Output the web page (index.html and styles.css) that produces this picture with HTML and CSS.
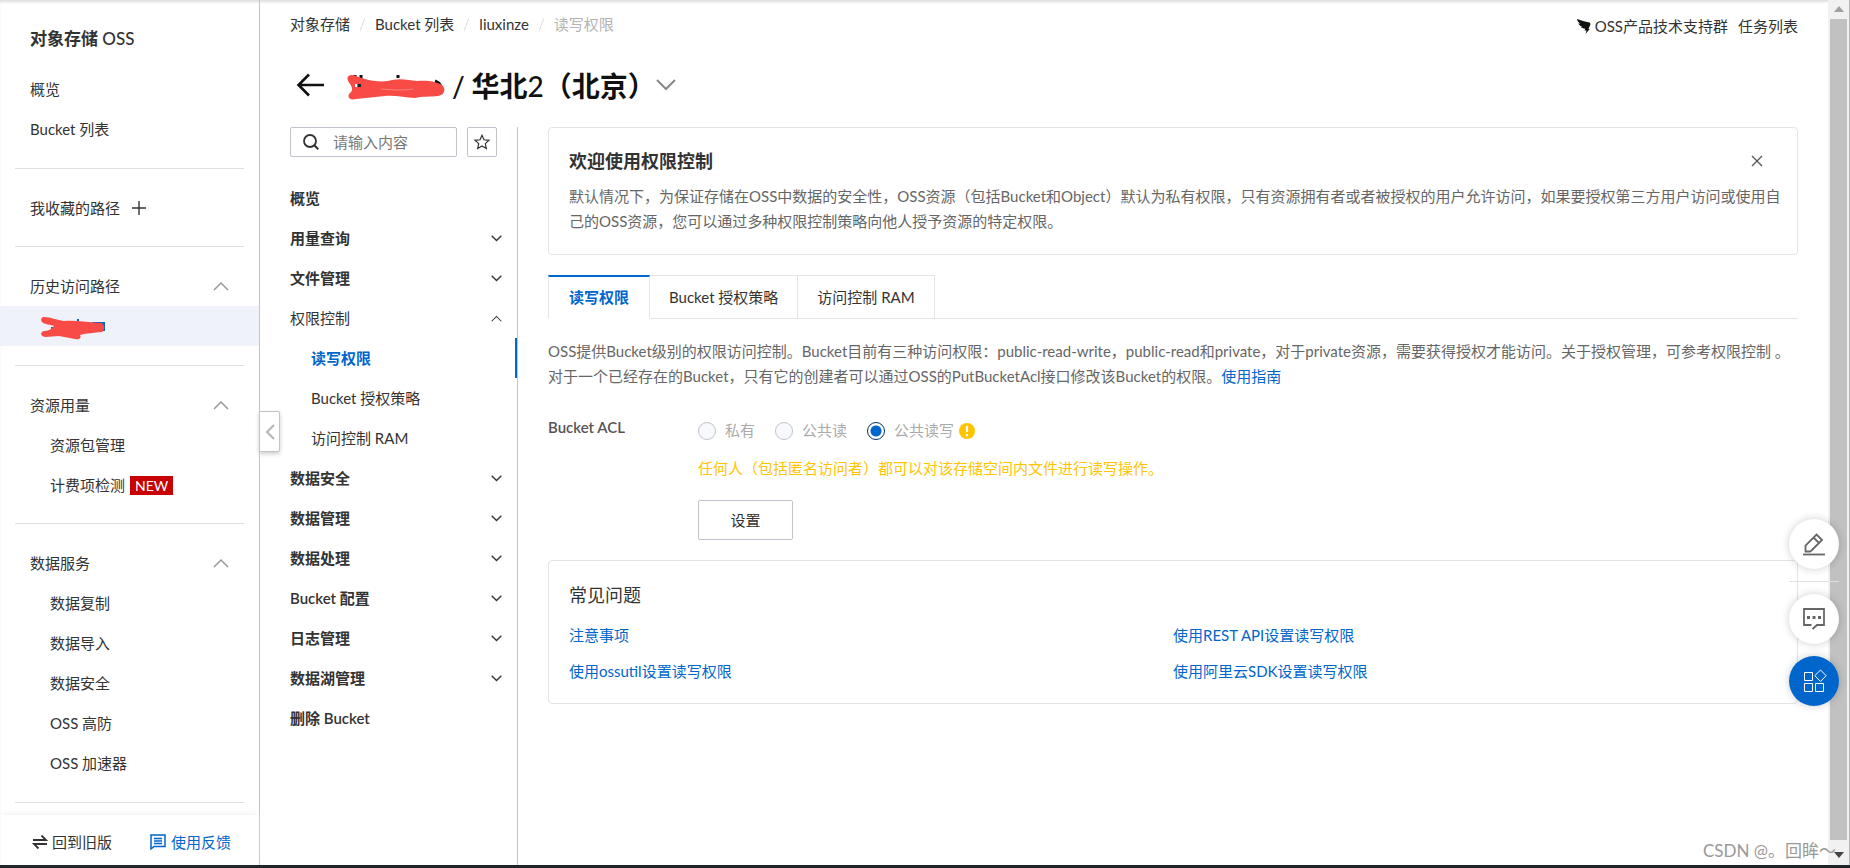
FILE: index.html
```html
<!DOCTYPE html>
<html lang="zh-CN">
<head>
<meta charset="utf-8">
<title>对象存储 OSS</title>
<link rel="stylesheet" href="styles.css">
</head>
<body>
<svg width="0" height="0" class="defs" aria-hidden="true">
  <symbol id="up" viewBox="0 0 16 10"><path d="M1 9 8 2l7 7" fill="none" stroke="currentColor" stroke-width="1.5"/></symbol>
  <symbol id="down" viewBox="0 0 16 10"><path d="M1 1l7 7 7-7" fill="none" stroke="currentColor" stroke-width="2"/></symbol>
</svg>
<div class="app">
  <aside class="sidebar">
    <h2 class="product"><b>对象存储</b> OSS</h2>
    <nav class="side-nav">
      <a class="row" href="#">概览</a>
      <a class="row" href="#">Bucket 列表</a>
    </nav>
    <section class="group">
      <div class="row">我收藏的路径
        <button class="plus" aria-label="添加路径"><svg viewBox="0 0 14 14"><path d="M7 0v14M0 7h14" stroke="currentColor" stroke-width="1.4"/></svg></button>
      </div>
    </section>
    <section class="group">
      <button class="row fold">历史访问路径<svg class="chev"><use href="#up"/></svg></button>
      <a class="row sub selected" href="#" aria-label="Bucket">
        <svg class="scribble-s" viewBox="0 0 66 24"><path d="M12 11v5M38 3v2M52 7h12v8" stroke="#06c" stroke-width="2" fill="none"/><path d="M4 1C11 1 16 4 24 5c12-1 26 2 38 2 3 3 3 6 0 9-8 1-15 1-22 3 2 3-1 5-5 4l-16-3-14 1c-5-1-5-5-1-6 4 0 8-2 10-5-4-2-9-1-12-4-2-3 0-5 2-5z" fill="#f84b46"/></svg>
      </a>
    </section>
    <section class="group">
      <button class="row fold">资源用量<svg class="chev"><use href="#up"/></svg></button>
      <a class="row sub" href="#">资源包管理</a>
      <a class="row sub" href="#">计费项检测<span class="new">NEW</span></a>
    </section>
    <section class="group last">
      <button class="row fold">数据服务<svg class="chev"><use href="#up"/></svg></button>
      <a class="row sub" href="#">数据复制</a>
      <a class="row sub" href="#">数据导入</a>
      <a class="row sub" href="#">数据安全</a>
      <a class="row sub" href="#">OSS 高防</a>
      <a class="row sub" href="#">OSS 加速器</a>
    </section>
    <footer class="side-foot">
      <a href="#"><svg class="swap" viewBox="0 0 14 14"><path d="M0 5h13L8.500 .5M14 9H1l4.500 4.500" fill="none" stroke="currentColor" stroke-width="1.800"/></svg>回到旧版</a>
      <a class="link" href="#"><svg class="note" viewBox="0 0 16 16"><path d="M1 15V1h14v11.500H4z" fill="none" stroke="currentColor" stroke-width="1.500"/><path d="M4 4.500h8M4 7h8M4 9.500h8" stroke="currentColor" stroke-width="1.300"/></svg>使用反馈</a>
    </footer>
    <button class="collapse" aria-label="收起"><svg viewBox="0 0 10 16"><path d="M9 1 2 8l7 7" fill="none" stroke="#b5b5b5" stroke-width="2"/></svg></button>
  </aside>

  <main class="main">
    <header class="top">
      <nav class="crumbs">
        <a href="#">对象存储</a><i></i><a href="#">Bucket 列表</a><i></i><a href="#">liuxinze</a><i></i><span>读写权限</span>
      </nav>
      <div class="top-links">
        <a href="#"><svg class="wing" viewBox="0 0 14 15"><path d="M0 0c4 1.500 8 2.500 12.500 3.500 1 .5 1 1.500.8 2.300L11.500 10h1.200L8.500 15l1-3.500H7.500l.8-1.800C6 9.500 4.500 9 3.500 7.800l2 .2C3.500 7.200 2 6 1.300 4.300l2.200.5C1.500 3.500.3 2 0 0z" fill="#111"/></svg>OSS产品技术支持群</a>
        <a href="#">任务列表</a>
      </div>
    </header>
    <div class="heading">
      <button class="back" aria-label="返回"><svg viewBox="0 0 28 24"><path d="M13 1.500 2.500 12 13 22.500M2 12h26" fill="none" stroke="#111" stroke-width="2.600"/></svg></button>
      <svg class="scribble" viewBox="0 0 98 26"><path d="M8 1v8M14 1v4M51 1v3M88 7q8 3 6 13" stroke="#111" stroke-width="3" fill="none"/><path d="M4 1c5 0 14 5 24 6 8 1 14 0 17-1 9-2 17 0 25 1 11-1 22 1 26 5 3 4 1 9-5 10-7 1-16 0-23 2-10 0-19-3-30-2l-29 3c-7 2-10-3-5-7 2-2 1-5-1-8C0 6-1 2 4 1z" fill="#f84b46"/><path d="M8 10h2v3H8z" fill="#fff"/><path d="M11 10h3v3h-3z" fill="#222"/><path d="M34 15q20 2 32 0" fill="none" stroke="#fff" stroke-opacity=".5" stroke-width=".6"/></svg>
      <h1><span>/</span> 华北<span>2</span>（北京）</h1>
      <button class="switch" aria-label="切换"><svg viewBox="0 0 20 12"><path d="M1 1l9 9 9-9" fill="none" stroke="#888" stroke-width="2"/></svg></button>
    </div>

    <div class="body">
      <div class="subnav">
        <div class="tools">
          <label class="search">
            <svg viewBox="0 0 16 16"><circle cx="7" cy="7" r="6" fill="none" stroke="#333" stroke-width="1.800"/><path d="m11 11 4.300 4.300" stroke="#333" stroke-width="2"/></svg>
            <input type="text" placeholder="请输入内容" aria-label="搜索">
          </label>
          <button class="star" aria-label="收藏"><svg viewBox="0 0 16 16"><path d="m8 1.300 2 4.500 5 .5-3.700 3.300 1 4.900L8 12l-4.300 2.500 1-4.900L1 6.300l5-.5z" fill="none" stroke="#333" stroke-width="1.200"/></svg></button>
        </div>
        <nav class="menu">
          <a href="#">概览</a>
          <a href="#">用量查询<svg><use href="#down"/></svg></a>
          <a href="#">文件管理<svg><use href="#down"/></svg></a>
          <a class="open" href="#">权限控制<svg><use href="#up"/></svg></a>
          <a class="child current" href="#">读写权限</a>
          <a class="child" href="#">Bucket 授权策略</a>
          <a class="child" href="#">访问控制 RAM</a>
          <a href="#">数据安全<svg><use href="#down"/></svg></a>
          <a href="#">数据管理<svg><use href="#down"/></svg></a>
          <a href="#">数据处理<svg><use href="#down"/></svg></a>
          <a href="#">Bucket 配置<svg><use href="#down"/></svg></a>
          <a href="#">日志管理<svg><use href="#down"/></svg></a>
          <a href="#">数据湖管理<svg><use href="#down"/></svg></a>
          <a href="#">删除 Bucket</a>
        </nav>
      </div>

      <div class="content">
        <section class="card welcome">
          <div class="card-head">
            <h3>欢迎使用权限控制</h3>
            <button class="close" aria-label="关闭"><svg viewBox="0 0 12 12"><path d="m1 1 10 10M11 1 1 11" stroke="#555" stroke-width="1.300"/></svg></button>
          </div>
          <p>默认情况下，为保证存储在OSS中数据的安全性，OSS资源（包括Bucket和Object）默认为私有权限，只有资源拥有者或者被授权的用户允许访问，如果要授权第三方用户访问或使用自己的OSS资源，您可以通过多种权限控制策略向他人授予资源的特定权限。</p>
        </section>

        <div class="tabs" role="tablist">
          <button class="tab active" role="tab" aria-selected="true">读写权限</button>
          <button class="tab" role="tab">Bucket 授权策略</button>
          <button class="tab" role="tab">访问控制 RAM</button>
        </div>

        <p class="desc">OSS提供Bucket级别的权限访问控制。Bucket目前有三种访问权限：public-read-write，public-read和private，对于private资源，需要获得授权才能访问。关于授权管理，可参考权限控制 。<br>对于一个已经存在的Bucket，只有它的创建者可以通过OSS的PutBucketAcl接口修改该Bucket的权限。<a class="link" href="#">使用指南</a></p>

        <div class="acl">
          <div class="acl-label">Bucket ACL</div>
          <div class="acl-field">
            <div class="radios">
              <label><input type="radio" name="acl" disabled>私有</label>
              <label><input type="radio" name="acl" disabled>公共读</label>
              <label><input type="radio" name="acl" disabled checked>公共读写</label>
              <svg class="warn" viewBox="0 0 16 16"><circle cx="8" cy="8" r="8" fill="#ffc400"/><path d="M8 3v6M8 11v2.200" stroke="#fff" stroke-width="2.200"/></svg>
            </div>
            <p class="warning">任何人（包括匿名访问者）都可以对该存储空间内文件进行读写操作。</p>
            <button class="set">设置</button>
          </div>
        </div>

        <section class="card faq">
          <h3>常见问题</h3>
          <div class="faq-grid">
            <a class="link" href="#">注意事项</a>
            <a class="link" href="#">使用REST API设置读写权限</a>
            <a class="link" href="#">使用ossutil设置读写权限</a>
            <a class="link" href="#">使用阿里云SDK设置读写权限</a>
          </div>
        </section>
      </div>
    </div>
  </main>

  <div class="scroll" aria-hidden="true">
    <svg viewBox="0 0 10 6"><path d="M0 6 5 0l5 6z" fill="#a0a0a0"/></svg>
    <div class="thumb"></div>
    <svg viewBox="0 0 10 6"><path d="m0 0 5 6 5-6z" fill="#444"/></svg>
  </div>

  <div class="floats">
    <button aria-label="编辑"><svg viewBox="0 0 24 24"><path d="M3.500 19.500v-6L14.500 2.500l5.500 5.500L9.500 18.500 8 19.500zM11.500 5.500l5.500 5.500" fill="none" stroke="#666" stroke-width="1.800"/><path d="M1 22.500h22" stroke="#666" stroke-width="1.800"/></svg></button>
    <hr>
    <button aria-label="消息"><svg viewBox="0 0 24 24"><path d="M9.500 18H2V2h20v16h-7l-4.500 4" fill="none" stroke="#666" stroke-width="1.800"/><path d="M5 9h3v3H5zM10.500 9h3v3h-3zM16 9h3v3h-3z" fill="#666"/></svg></button>
    <button class="apps" aria-label="应用"><svg viewBox="0 0 24 24"><path d="M2.500 3.500h8v8h-8zM2.500 14.500h8v8h-8zM13.500 14.500h8v8h-8zM18.500 1l5.700 5.700-5.700 5.700-5.700-5.700z" fill="none" stroke="#fff" stroke-width="1"/></svg></button>
  </div>
  <div class="watermark">CSDN @。回眸～</div>
</div>
</body>
</html>
```
FILE: styles.css
```css
* { box-sizing: border-box; }
body {
  margin: 0;
  font: 15px/25px Lato, "Noto Sans CJK SC", sans-serif;
  color: #333;
  background: #fff;
}
a { color: inherit; text-decoration: none; }
button { font: inherit; color: inherit; background: none; border: 0; padding: 0; }
h1, h2, h3, p { margin: 0; }
svg { display: block; flex: none; overflow: visible; }
.defs { position: absolute; }
.link { color: #06c; }

.app {
  position: relative;
  display: flex;
  min-height: 100vh;
  border-bottom: 3px solid #202427;
  box-shadow: inset 0 3px 3px -1px #ddd;
}

/* left sidebar */
.sidebar {
  position: relative;
  flex: none;
  width: 260px;
  display: flex;
  flex-direction: column;
  border-right: 1px solid #c0c3cc;
}
.product { padding: 26px 30px 18px; font-size: 17px; font-weight: 500; }
.side-nav { padding-bottom: 19px; }
.row {
  display: flex;
  align-items: center;
  width: 100%;
  height: 40px;
  padding: 0 30px;
}
.row.sub { padding-left: 50px; }
.row.selected { padding: 4px 0 0 40px; background: #eff2f8; }
.fold { justify-content: space-between; }
.chev { width: 16px; height: 10px; color: #999; }
.plus { margin-left: 12px; }
.plus svg { width: 14px; height: 14px; }
.group { position: relative; padding: 20px 0 18px; }
.group:has(.selected) { padding-bottom: 19px; }
.group::before, .group.last::after {
  content: "";
  position: absolute;
  left: 15px;
  right: 15px;
  top: 0;
  height: 1px;
  background: #e0e0e0;
}
.group.last { padding-bottom: 20px; }
.group.last::after { top: auto; bottom: 0; }
.scribble-s { width: 66px; height: 24px; }
.new { margin-left: 5px; padding: 0 5px; font-size: 14px; line-height: 19px; background: #c80000; color: #fff; }
.side-foot {
  display: flex;
  flex: 1;
  align-items: center;
  justify-content: space-between;
  margin-top: 12px;
  padding: 4px 28px 0 33px;
  box-shadow: 0 -3px 6px -2px #eee;
}
.side-foot a { display: flex; align-items: center; gap: 5px; }
.swap { width: 14px; height: 14px; }
.note { width: 16px; height: 16px; }
.collapse {
  position: absolute;
  left: 259px;
  top: 411px;
  z-index: 1;
  width: 21px;
  height: 41px;
  padding-left: 5px;
  background: #fff;
  border: 1px solid #c0c3cc;
  border-radius: 0 2px 2px 0;
  box-shadow: 0 2px 4px #ccc;
}
.collapse svg { width: 10px; height: 16px; }

/* main column */
.main { flex: 1; min-width: 0; display: flex; flex-direction: column; padding: 12px 30px 0; }
.top { display: flex; justify-content: space-between; height: 26px; }
.crumbs, .top-links { display: flex; }
.crumbs span { color: #b3b3b3; }
.crumbs i { width: 1px; height: 13px; margin: 6px 12px; background: #ddd; transform: rotate(20deg); }
.top-links { gap: 10px; padding-top: 2px; }
.top-links a { display: flex; align-items: center; gap: 4px; }
.wing { width: 14px; height: 15px; }
.heading { display: flex; align-items: center; height: 89px; padding: 4px 6px 0; color: #111; }
.back svg { width: 28px; height: 24px; }
.scribble { width: 98px; height: 26px; margin: 4px 7px 0 23px; }
.heading h1 { padding-top: 3px; font-size: 28px; line-height: 40px; font-weight: 700; }
.heading h1 span { font-weight: 500; }
.switch svg { width: 20px; height: 12px; }

.body { flex: 1; display: flex; gap: 30px; }
.subnav { flex: none; width: 228px; border-right: 1px solid #c0c3cc; }
.tools { display: flex; gap: 10px; height: 30px; padding-right: 20px; }
.search {
  flex: 1;
  display: flex;
  align-items: center;
  gap: 14px;
  padding-left: 12px;
  border: 1px solid #c0c3cc;
  border-radius: 2px;
}
.search svg { width: 16px; height: 16px; }
.search input { width: 100%; min-width: 0; padding: 0; border: 0; outline: 0; font: inherit; background: none; }
.search input::placeholder { color: #777; }
.star { display: grid; place-items: center; width: 30px; border: 1px solid #c0c3cc; border-radius: 2px; }
.star svg { width: 16px; height: 16px; }
.menu { padding-top: 21px; }
.menu a {
  display: flex;
  align-items: center;
  justify-content: space-between;
  height: 40px;
  padding-right: 15px;
  font-weight: 600;
}
.menu svg { width: 11px; height: 7px; }
.menu a.open, .menu a.child { font-weight: 400; }
.menu a.child { padding-left: 21px; }
.menu a.current { color: #06c; font-weight: 600; border-right: 2px solid #06c; }

/* content */
.content { flex: 1; min-width: 0; }
.card { border: 1px solid #e3e4e6; border-radius: 4px; }
.card h3 { font-size: 18px; line-height: 30px; }
.welcome { padding: 18px 12px 20px 20px; }
.welcome p { color: #666; }
.card-head { display: flex; align-items: center; justify-content: space-between; padding: 0 22px 8px 0; }
.close svg { width: 12px; height: 12px; }
.tabs { display: flex; margin-top: 20px; border-bottom: 1px solid #e3e4e6; }
.tab {
  height: 44px;
  margin-bottom: -1px;
  padding: 0 19px;
  border: 1px solid #e3e4e6;
  border-left: 0;
}
.tab.active {
  padding: 0 20px;
  border-left: 1px solid #e3e4e6;
  border-top: 2px solid #06c;
  border-bottom-color: #fff;
  color: #06c;
  font-weight: 600;
}
.desc { padding-top: 20px; color: #666; }
.acl { display: flex; padding-top: 26px; color: #555; }
.acl-label { width: 150px; font-weight: 600; }
.radios { display: flex; align-items: center; padding-top: 3px; color: #aaa; }
.radios label { display: flex; align-items: center; margin-right: 20px; }
.radios label:last-of-type { margin-right: 5px; }
.radios input {
  appearance: none;
  width: 18px;
  height: 18px;
  margin: 0 9px 0 0;
  border: 1px solid #c0c3cc;
  border-radius: 50%;
  background: #f7f9fc;
}
.radios input:checked {
  border-color: #036;
  background: radial-gradient(circle, #06c 5px, #fff 6px);
}
.warn { width: 16px; height: 16px; }
.warning { padding-top: 13px; color: #ffc400; }
.set { margin-top: 19px; width: 95px; height: 40px; border: 1px solid #c0c3cc; border-radius: 2px; color: #333; }
.faq { margin-top: 20px; padding: 19px 20px; }
.faq h3 { font-weight: 400; }
.faq-grid { display: grid; grid-template-columns: 1fr 1fr; row-gap: 11px; padding-top: 13px; }

/* window scrollbar */
.scroll {
  flex: none;
  display: flex;
  flex-direction: column;
  align-items: center;
  gap: 12px;
  width: 22px;
  padding: 6px 0 7px;
  background: #f1f1f1;
  border-right: 1px solid #b5b5b5;
}
.scroll svg { width: 10px; height: 6px; }
.thumb { flex: 1; width: 17px; margin-top: -5px; background: #c1c1c1; }

/* floating buttons over the page edge */
.floats { position: absolute; right: 11px; bottom: 159px; width: 50px; }
.floats button {
  display: grid;
  place-items: center;
  width: 50px;
  height: 50px;
  border-radius: 50%;
  background: #fff;
  box-shadow: 0 0 8px rgba(0, 0, 0, .2);
}
.floats svg { width: 24px; height: 24px; }
.floats hr { height: 1px; margin: 12px 0; border: 0; background: #dde0e6; }
.floats .apps { margin-top: 12px; background: #06c; }
.watermark { position: absolute; right: 14px; bottom: 2px; font-size: 17px; color: #999; }
```
